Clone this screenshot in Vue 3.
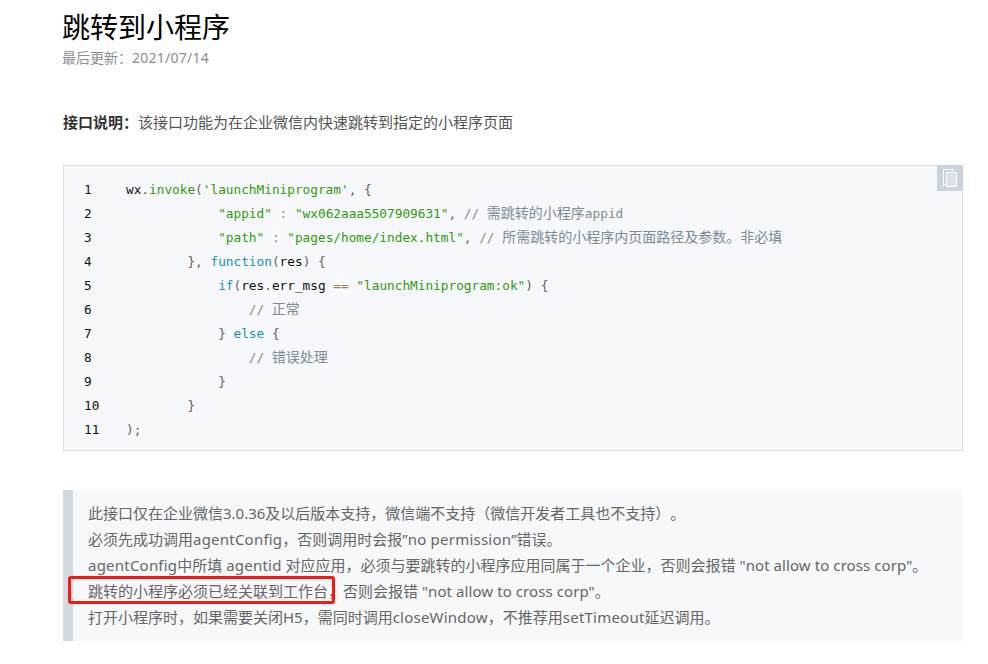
<script setup>
const P = 'punc', S = 'str', C = 'com', K = 'kw', F = 'fn', O = 'op', N = '', Z = 'com cjk'
const lines = [
  [[N, "wx"], [P, "."], [F, "invoke"], [P, "("], [S, "'launchMiniprogram'"], [P, ","], [N, " "], [P, "{"]],
  [[N, "            "], [S, '"appid"'], [N, " "], [O, ":"], [N, " "], [S, '"wx062aaa5507909631"'], [P, ","], [N, " "], [C, "// "], [Z, "需跳转的小程序"], [C, "appid"]],
  [[N, "            "], [S, '"path"'], [N, " "], [O, ":"], [N, " "], [S, '"pages/home/index.html"'], [P, ","], [N, " "], [C, "// "], [Z, "所需跳转的小程序内页面路径及参数。非必填"]],
  [[N, "        "], [P, "}"], [P, ","], [N, " "], [K, "function"], [P, "("], [N, "res"], [P, ")"], [N, " "], [P, "{"]],
  [[N, "            "], [K, "if"], [P, "("], [N, "res"], [P, "."], [N, "err_msg"], [N, " "], [O, "=="], [N, " "], [S, '"launchMiniprogram:ok"'], [P, ")"], [N, " "], [P, "{"]],
  [[N, "                "], [C, "// "], [Z, "正常"]],
  [[N, "            "], [P, "}"], [N, " "], [K, "else"], [N, " "], [P, "{"]],
  [[N, "                "], [C, "// "], [Z, "错误处理"]],
  [[N, "            "], [P, "}"]],
  [[N, "        "], [P, "}"]],
  [[P, ")"], [P, ";"]],
]
const W = 'wide', Q = 'quote'
const notes = [
  [[N, '此接口仅在企业微信3.0.36及以后版本支持，微信端不支持（微信开发者工具也不支持）。']],
  [[N, '必须先成功调用'], [W, 'agentConfig'], [N, '，否则调用时会报”'], [W, 'no permission'], [N, '”错误。']],
  [[W, 'agentConfig'], [N, '中所填 '], [W, 'agentid'], [N, ' 对应应用，必须与要跳转的小程序应用同属于一个企业，否则会报错 '], [Q, '"not allow to cross corp"'], [N, '。']],
  [[N, '跳转的小程序必须已经关联到工作台，否则会报错 '], [Q, '"not allow to cross corp"'], [N, '。']],
  [[N, '打开小程序时，如果需要关闭H5，需同时调用'], [W, 'closeWindow'], [N, '，不推荐用'], [W, 'setTimeout'], [N, '延迟调用。']],
]
</script>

<template>
  <main class="page">
    <h1 class="title">跳转到小程序</h1>
    <div class="updated">最后更新：<span class="date">2021/07/14</span></div>
    <p class="intro"><strong>接口说明：</strong>该接口功能为在企业微信内快速跳转到指定的小程序页面</p>

    <div class="code">
      <button class="copy" aria-label="复制">
        <svg width="26" height="26" viewBox="0 0 26 26">
          <path d="M6.5 21.5V4.5h10v2M6.5 19.5h2" fill="none" stroke="#fff" stroke-width="1"/>
          <rect x="9.5" y="7.5" width="10" height="14" fill="#dde2ea" stroke="#fff" stroke-width="1"/>
        </svg>
      </button>
      <div v-for="(line, i) in lines" :key="i" class="row">
        <span class="num">{{ i + 1 }}</span>
        <span class="src"><span v-for="(t, j) in line" :key="j" :class="t[0]">{{ t[1] }}</span></span>
      </div>
    </div>

    <div class="note">
      <p v-for="(n, i) in notes" :key="i"><span v-for="(s, j) in n" :key="j" :class="s[0]">{{ s[1] }}</span></p>
      <span class="mark"></span>
    </div>
  </main>
</template>

<style scoped>
.page {
  width: 900px;
  height: 664px;
  overflow: hidden;
  margin-left: 63px;
  font-family: "Noto Sans", "Noto Sans CJK SC", sans-serif;
  text-spacing-trim: space-all;
  color: #4c4f55;
}
.title {
  margin: 0 0 1px -1px;
  padding-top: 8px;
  font-size: 28px;
  line-height: 38px;
  font-weight: 400;
  color: #000;
}
.updated {
  font-size: 14px;
  line-height: 22px;
  color: #8a8f97;
  margin-left: -1px;
}
.date {
  letter-spacing: 0.25px;
}
.intro {
  margin: 41px 0 0;
  font-size: 15px;
  line-height: 24px;
  color: #555;
}
.intro strong {
  color: #333;
  font-weight: 700;
}
.code {
  position: relative;
  box-sizing: border-box;
  height: 286px;
  margin-top: 31px;
  padding: 12px 0 0 20px;
  background: #f6f8fb;
  border: 1px solid #dcdee3;
}
.copy {
  position: absolute;
  top: -1px;
  right: -1px;
  width: 26px;
  height: 26px;
  padding: 0;
  border: 0;
  background: #ccd3dc;
  display: block;
}
.copy svg {
  display: block;
}
.row {
  display: flex;
  height: 24px;
  line-height: 24px;
  font-family: "DejaVu Sans Mono", "Noto Sans CJK SC", monospace;
  font-size: 12.75px;
  color: #111;
}
.num {
  width: 42px;
  flex: none;
}
.src {
  white-space: pre;
}
.punc { color: #5f6364; }
.str { color: #2f9c0a; }
.com { color: #7d8b99; }
.cjk { font-size: 14px; line-height: 1; }
.kw { color: #1990b8; }
.fn { color: #2f9c0a; }
.op { color: #a67f59; background: rgba(255, 255, 255, 0.6); }
.note {
  position: relative;
  box-sizing: border-box;
  height: 151px;
  margin-top: 39px;
  padding: 10px 0 0 15px;
  background: #f7f8fa;
  border-left: 10px solid #d3d9de;
}
.note p {
  margin: 0;
  font-size: 15px;
  line-height: 26px;
  color: #666;
  white-space: nowrap;
}
.wide {
  letter-spacing: 0.22px;
}
.quote {
  letter-spacing: 0.08px;
}
.mark {
  position: absolute;
  left: -5px;
  top: 86px;
  width: 267px;
  height: 28px;
  box-sizing: border-box;
  border: 3px solid #f51a10;
  border-radius: 3px;
}
</style>

<style>
body { background: #fff; }
</style>
